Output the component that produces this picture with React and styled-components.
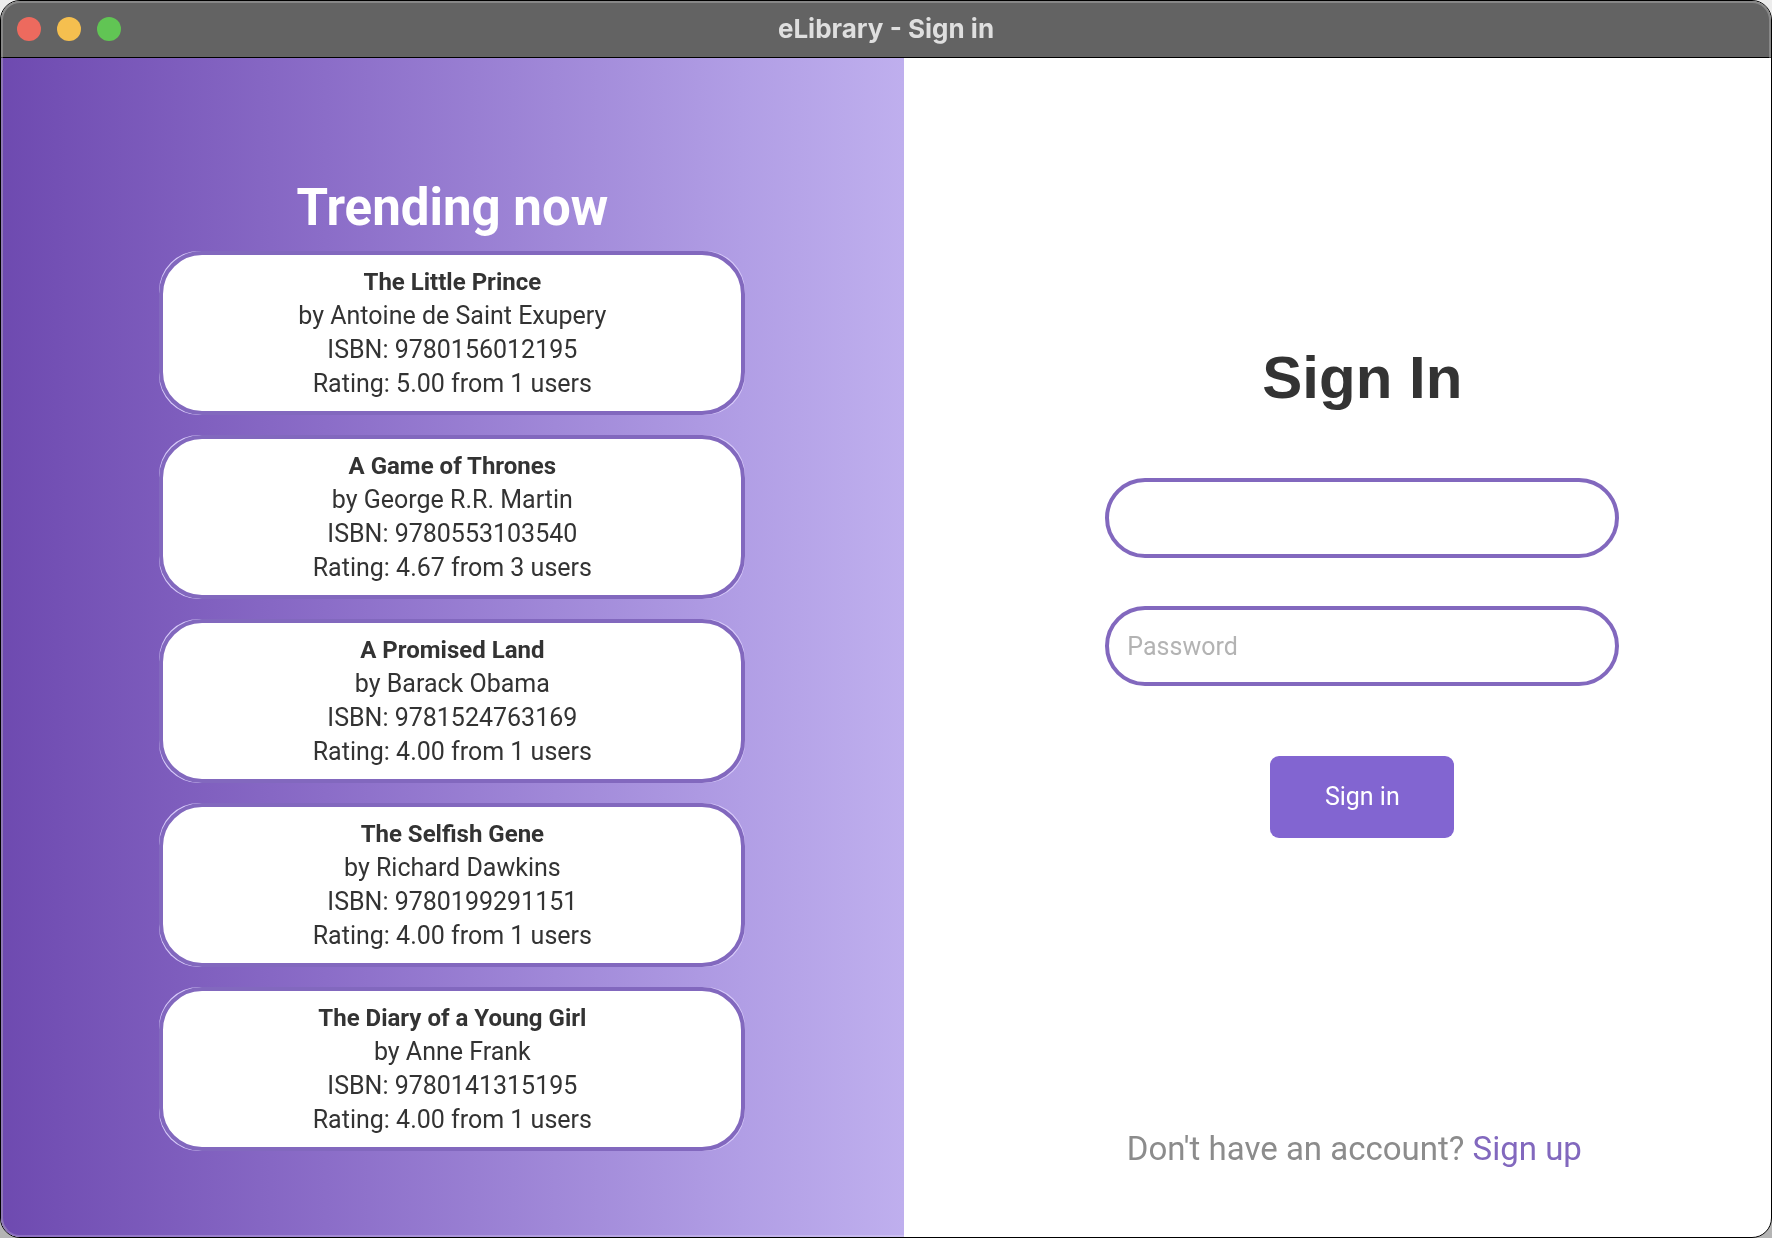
import React from 'react';
import styled, { createGlobalStyle, ThemeProvider } from 'styled-components';

const theme = {
  text: '"Roboto", "Inter", "Liberation Sans", sans-serif',
  system: '"Inter", "Liberation Sans", sans-serif',
  display: '"Liberation Sans", Arial, sans-serif',
  purple: '#8268be',
  button: '#8265d1',
  ink: '#333333',
};

const GlobalStyle = createGlobalStyle`
  *, *::before, *::after { box-sizing: border-box; }
  body {
    margin: 0;
    background: linear-gradient(#ececec, #b4b4b4);
    font-family: ${theme.text};
    color: ${theme.ink};
  }
`;

const Window = styled.div`
  position: relative;
  display: flex;
  flex-direction: column;
  min-height: 100vh;
  border: 1px solid #000;
  border-radius: 20px;
  overflow: hidden;
  background: #fff;

  &::after {
    content: '';
    position: absolute;
    inset: 0;
    border: 2px solid rgba(190, 190, 190, 0.4);
    border-bottom-color: rgba(255, 255, 255, 0.2);
    border-radius: 19px;
    pointer-events: none;
    mix-blend-mode: lighten;
  }
`;

const TitleBar = styled.header`
  display: grid;
  grid-template-columns: 1fr auto 1fr;
  align-items: center;
  height: 57px;
  padding: 0 16px;
  background: #636363;
  border-bottom: 1px solid #000;
`;

const Lights = styled.div`
  display: flex;
  gap: 16px;
`;

const Light = styled.button`
  width: 24px;
  height: 24px;
  padding: 0;
  border: 0;
  border-radius: 50%;
  background: ${(p) => p.$color};
`;

const WindowTitle = styled.div`
  font: 700 26px/32px ${(p) => p.theme.system};
  color: #dfdfdf;
`;

const Content = styled.main`
  flex: 1;
  display: grid;
  grid-template-columns: 51fr 49fr;
`;

const Trending = styled.section`
  display: flex;
  flex-direction: column;
  align-items: center;
  padding: 120px 24px 80px;
  background: linear-gradient(90deg, #6e4ab0 0%, #8b6dc8 36%, #b19ee5 82%, #bfafee 100%);
`;

const TrendingTitle = styled.h2`
  margin: 0 0 13px;
  font-size: 51px;
  font-weight: 700;
  line-height: 60px;
  color: #fff;
`;

const BookList = styled.ul`
  display: flex;
  flex-direction: column;
  gap: 20px;
  width: 100%;
  max-width: 586px;
  margin: 0;
  padding: 0;
  list-style: none;
`;

const BookCard = styled.li`
  border-radius: 40px;
  background: #d9ccfa;
`;

const BookFrame = styled.article`
  padding: 10px 20px;
  border: 4px solid ${(p) => p.theme.purple};
  border-radius: 43px;
  background: #fff;
  text-align: center;
`;

const BookTitle = styled.h3`
  margin: 0;
  font-size: 24px;
  font-weight: 700;
  line-height: 34px;
`;

const BookLine = styled.p`
  margin: 0;
  font-size: 25px;
  line-height: 34px;
`;

const SignInPanel = styled.section`
  display: flex;
  flex-direction: column;
  align-items: center;
  padding: 280px 0 68px 50px;
`;

const Form = styled.form`
  display: flex;
  flex-direction: column;
  align-items: center;
  width: 100%;
  max-width: 514px;
`;

const FormTitle = styled.h1`
  margin: 0 0 60px;
  font: 700 60px/80px ${(p) => p.theme.display};
`;

const Field = styled.label`
  display: block;
  width: 100%;
  margin-bottom: 48px;
`;

const TextBox = styled.input`
  display: block;
  width: 100%;
  height: 80px;
  padding: 0 18px;
  border: 4px solid ${(p) => p.theme.purple};
  border-radius: 40px;
  outline: 0;
  background: #fff;
  font: 400 25px/34px ${(p) => p.theme.text};
  color: ${(p) => p.theme.ink};

  &::placeholder {
    color: #b3b3b3;
    opacity: 1;
  }
`;

const SubmitButton = styled.button`
  width: 184px;
  height: 82px;
  margin-top: 22px;
  border: 0;
  border-radius: 9px;
  background: ${(p) => p.theme.button};
  font: 400 25px/34px ${(p) => p.theme.text};
  color: #fff;
`;

const Footer = styled.p`
  margin: auto 0 0;
  padding-right: 16px;
  font-size: 33px;
  line-height: 40px;
  color: #8c8c8c;
`;

const SignUpLink = styled.a`
  color: ${(p) => p.theme.purple};
  text-decoration: none;
`;

const lights = [
  { label: 'Close', color: '#ed6a5e' },
  { label: 'Minimize', color: '#f5bf4f' },
  { label: 'Zoom', color: '#61c554' },
];

const books = [
  { title: 'The Little Prince', author: 'Antoine de Saint Exupery', isbn: '9780156012195', rating: '5.00', users: 1 },
  { title: 'A Game of Thrones', author: 'George R.R. Martin', isbn: '9780553103540', rating: '4.67', users: 3 },
  { title: 'A Promised Land', author: 'Barack Obama', isbn: '9781524763169', rating: '4.00', users: 1 },
  { title: 'The Selfish Gene', author: 'Richard Dawkins', isbn: '9780199291151', rating: '4.00', users: 1 },
  { title: 'The Diary of a Young Girl', author: 'Anne Frank', isbn: '9780141315195', rating: '4.00', users: 1 },
];

function Book({ title, author, isbn, rating, users }) {
  return (
    <BookCard>
      <BookFrame>
        <BookTitle>{title}</BookTitle>
        <BookLine>by {author}</BookLine>
        <BookLine>ISBN: {isbn}</BookLine>
        <BookLine>
          Rating: {rating} from {users} users
        </BookLine>
      </BookFrame>
    </BookCard>
  );
}

export default function App() {
  return (
    <ThemeProvider theme={theme}>
      <GlobalStyle />
      <Window>
        <TitleBar>
          <Lights>
            {lights.map((light) => (
              <Light key={light.label} type="button" aria-label={light.label} $color={light.color} />
            ))}
          </Lights>
          <WindowTitle>eLibrary - Sign in</WindowTitle>
        </TitleBar>
        <Content>
          <Trending>
            <TrendingTitle>Trending now</TrendingTitle>
            <BookList>
              {books.map((book) => (
                <Book key={book.isbn} {...book} />
              ))}
            </BookList>
          </Trending>
          <SignInPanel>
            <Form onSubmit={(event) => event.preventDefault()}>
              <FormTitle>Sign In</FormTitle>
              <Field>
                <TextBox type="text" name="username" aria-label="Username" />
              </Field>
              <Field>
                <TextBox type="password" name="password" aria-label="Password" placeholder="Password" />
              </Field>
              <SubmitButton type="submit">Sign in</SubmitButton>
            </Form>
            <Footer>
              Don't have an account? <SignUpLink href="#sign-up">Sign up</SignUpLink>
            </Footer>
          </SignInPanel>
        </Content>
      </Window>
    </ThemeProvider>
  );
}
